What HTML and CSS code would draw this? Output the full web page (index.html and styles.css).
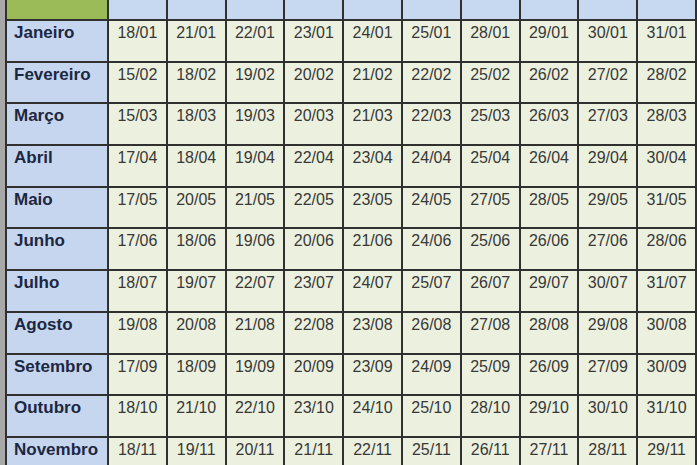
FILE: index.html
```html
<!DOCTYPE html>
<html lang="pt">
<head>
<meta charset="utf-8">
<link rel="stylesheet" href="styles.css">
</head>
<body>
<div class="page">
  <div class="strip"></div>
  <table class="cal">
    <colgroup>
      <col class="c-month">
      <col><col><col><col><col><col><col><col><col><col>
    </colgroup>
    <thead>
      <tr>
        <th class="corner"></th>
        <th></th><th></th><th></th><th></th><th></th><th></th><th></th><th></th><th></th><th></th>
      </tr>
    </thead>
    <tbody>
      <tr><th>Janeiro</th><td>18/01</td><td>21/01</td><td>22/01</td><td>23/01</td><td>24/01</td><td>25/01</td><td>28/01</td><td>29/01</td><td>30/01</td><td>31/01</td></tr>
      <tr><th>Fevereiro</th><td>15/02</td><td>18/02</td><td>19/02</td><td>20/02</td><td>21/02</td><td>22/02</td><td>25/02</td><td>26/02</td><td>27/02</td><td>28/02</td></tr>
      <tr><th>Março</th><td>15/03</td><td>18/03</td><td>19/03</td><td>20/03</td><td>21/03</td><td>22/03</td><td>25/03</td><td>26/03</td><td>27/03</td><td>28/03</td></tr>
      <tr><th>Abril</th><td>17/04</td><td>18/04</td><td>19/04</td><td>22/04</td><td>23/04</td><td>24/04</td><td>25/04</td><td>26/04</td><td>29/04</td><td>30/04</td></tr>
      <tr><th>Maio</th><td>17/05</td><td>20/05</td><td>21/05</td><td>22/05</td><td>23/05</td><td>24/05</td><td>27/05</td><td>28/05</td><td>29/05</td><td>31/05</td></tr>
      <tr><th>Junho</th><td>17/06</td><td>18/06</td><td>19/06</td><td>20/06</td><td>21/06</td><td>24/06</td><td>25/06</td><td>26/06</td><td>27/06</td><td>28/06</td></tr>
      <tr><th>Julho</th><td>18/07</td><td>19/07</td><td>22/07</td><td>23/07</td><td>24/07</td><td>25/07</td><td>26/07</td><td>29/07</td><td>30/07</td><td>31/07</td></tr>
      <tr><th>Agosto</th><td>19/08</td><td>20/08</td><td>21/08</td><td>22/08</td><td>23/08</td><td>26/08</td><td>27/08</td><td>28/08</td><td>29/08</td><td>30/08</td></tr>
      <tr><th>Setembro</th><td>17/09</td><td>18/09</td><td>19/09</td><td>20/09</td><td>23/09</td><td>24/09</td><td>25/09</td><td>26/09</td><td>27/09</td><td>30/09</td></tr>
      <tr><th>Outubro</th><td>18/10</td><td>21/10</td><td>22/10</td><td>23/10</td><td>24/10</td><td>25/10</td><td>28/10</td><td>29/10</td><td>30/10</td><td>31/10</td></tr>
      <tr><th>Novembro</th><td>18/11</td><td>19/11</td><td>20/11</td><td>21/11</td><td>22/11</td><td>25/11</td><td>26/11</td><td>27/11</td><td>28/11</td><td>29/11</td></tr>
    </tbody>
  </table>
</div>
</body>
</html>
```

FILE: styles.css
```css
html, body {
  margin: 0;
  padding: 0;
  height: 100%;
  overflow: hidden;
  background: #dcdcdc;
}
.page {
  display: flex;
  align-items: flex-start;
  height: 100%;
}
.strip {
  width: 5px;
  flex: none;
  align-self: stretch;
  background: #a8a8a8;
}
.cal {
  border-collapse: collapse;
  table-layout: fixed;
  width: 690px;
  flex: none;
  font-family: "Liberation Sans", Arial, sans-serif;
  font-size: 16px;
}
.cal col { width: 58.8px; }
.cal col.c-month { width: 102px; }
.cal th, .cal td {
  border: 2px solid #303030;
  padding: 3px 0 0 0;
  vertical-align: top;
}
.cal thead th {
  height: 19px;
  padding: 0;
  border-top: none;
  background: #c6d9f1;
}
.cal thead th.corner {
  background: #9bbb59;
}
.cal tbody tr { height: 41.7px; }
.cal tbody th {
  text-align: left;
  padding: 2px 0 0 7px;
  font-size: 17px;
  font-weight: bold;
  color: #1c2742;
  background: #c6d6ef;
}
.cal tbody td {
  text-align: center;
  color: #383838;
  background: #ebf1de;
}
```
